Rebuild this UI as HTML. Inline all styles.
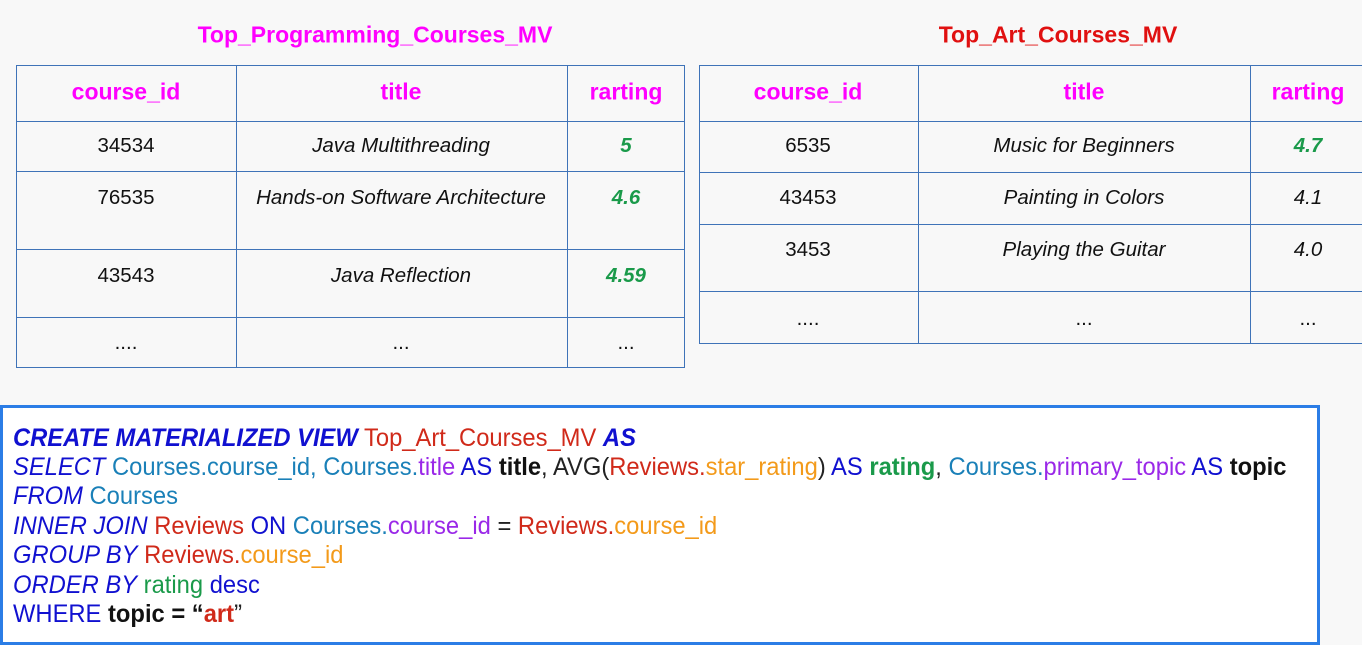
<!DOCTYPE html>
<html><head><meta charset="utf-8"><style>
body{margin:0;width:1362px;height:628px;background:#f8f8f8;position:relative;overflow:hidden;font-family:"Liberation Sans",Arial,sans-serif}
.hl{position:absolute;height:1px;background:#3f73b8}
.vl{position:absolute;width:1px;background:#3f73b8}
.t{position:absolute;transform:translate(-50%,-50%);white-space:nowrap;font-size:20.5px;color:#111}
.h{font-size:23px;font-weight:bold;color:#f0f}
.i{font-style:italic}
.g{color:#1a9a4a;font-weight:bold;font-style:italic}
#code{position:absolute;left:0;top:405px;width:1320px;height:240px;border:3px solid #2b7de6;background:#fff;box-sizing:border-box}
#code div{position:absolute;left:10px;white-space:nowrap;font-size:25px;line-height:28px;transform:scaleX(0.95);transform-origin:left center}
.k{color:#1010d0;font-style:italic}.kb{color:#1010d0;font-style:italic;font-weight:bold}
.b{color:#1010d0}.c{color:#1a80b8}.p{color:#9a28e8}.r{color:#d02a1a}.o{color:#f39a1a}.gr{color:#1a9a4a}.bk{color:#111;font-weight:bold}.dk{color:#222}
</style></head><body>
<div class="t h" style="left:375px;top:35px">Top_Programming_Courses_MV</div>
<div class="t h" style="left:1058px;top:35px;color:#e01010">Top_Art_Courses_MV</div>

<div class="hl" style="left:16px;width:669px;top:65px"></div>
<div class="hl" style="left:16px;width:669px;top:121px"></div>
<div class="hl" style="left:16px;width:669px;top:171px"></div>
<div class="hl" style="left:16px;width:669px;top:249px"></div>
<div class="hl" style="left:16px;width:669px;top:317px"></div>
<div class="hl" style="left:16px;width:669px;top:367px"></div>
<div class="vl" style="top:65px;height:303px;left:16px"></div>
<div class="vl" style="top:65px;height:303px;left:236px"></div>
<div class="vl" style="top:65px;height:303px;left:567px"></div>
<div class="vl" style="top:65px;height:303px;left:684px"></div>
<div class="t h" style="left:126px;top:92px">course_id</div>
<div class="t h" style="left:401px;top:92px">title</div>
<div class="t h" style="left:626px;top:92px">rarting</div>
<div class="t" style="left:126px;top:146px">34534</div>
<div class="t i" style="left:401px;top:146px">Java Multithreading</div>
<div class="t g" style="left:626px;top:146px">5</div>
<div class="t" style="left:126px;top:198px">76535</div>
<div class="t i" style="left:401px;top:198px">Hands-on Software Architecture</div>
<div class="t g" style="left:626px;top:198px">4.6</div>
<div class="t" style="left:126px;top:276px">43543</div>
<div class="t i" style="left:401px;top:276px">Java Reflection</div>
<div class="t g" style="left:626px;top:276px">4.59</div>
<div class="t" style="left:126px;top:343px">....</div>
<div class="t" style="left:401px;top:343px">...</div>
<div class="t" style="left:626px;top:343px">...</div>

<div class="hl" style="left:699px;width:663px;top:65px"></div>
<div class="hl" style="left:699px;width:663px;top:121px"></div>
<div class="hl" style="left:699px;width:663px;top:172px"></div>
<div class="hl" style="left:699px;width:663px;top:224px"></div>
<div class="hl" style="left:699px;width:663px;top:291px"></div>
<div class="hl" style="left:699px;width:663px;top:343px"></div>
<div class="vl" style="top:65px;height:279px;left:699px"></div>
<div class="vl" style="top:65px;height:279px;left:918px"></div>
<div class="vl" style="top:65px;height:279px;left:1250px"></div>
<div class="t h" style="left:808px;top:92px">course_id</div>
<div class="t h" style="left:1084px;top:92px">title</div>
<div class="t h" style="left:1308px;top:92px">rarting</div>
<div class="t" style="left:808px;top:146px">6535</div>
<div class="t i" style="left:1084px;top:146px">Music for Beginners</div>
<div class="t g" style="left:1308px;top:146px">4.7</div>
<div class="t" style="left:808px;top:198px">43453</div>
<div class="t i" style="left:1084px;top:198px">Painting in Colors</div>
<div class="t i" style="left:1308px;top:198px">4.1</div>
<div class="t" style="left:808px;top:250px">3453</div>
<div class="t i" style="left:1084px;top:250px">Playing the Guitar</div>
<div class="t i" style="left:1308px;top:250px">4.0</div>
<div class="t" style="left:808px;top:319px">....</div>
<div class="t" style="left:1084px;top:319px">...</div>
<div class="t" style="left:1308px;top:319px">...</div>

<div id="code">
<div style="top:16px"><span class="kb">CREATE MATERIALIZED VIEW</span> <span class="r">Top_Art_Courses_MV</span> <span class="kb">AS</span></div>
<div style="top:45px"><span class="k">SELECT</span> <span class="c">Courses.course_id, Courses.</span><span class="p">title</span> <span class="b">AS</span> <span class="bk">title</span><span class="dk">, AVG(</span><span class="r">Reviews.</span><span class="o">star_rating</span><span class="dk">)</span> <span class="b">AS</span> <span class="gr" style="font-weight:bold">rating</span><span class="dk">,</span> <span class="c">Courses.</span><span class="p">primary_topic</span> <span class="b">AS</span> <span class="bk">topic</span></div>
<div style="top:74px"><span class="k">FROM</span> <span class="c">Courses</span></div>
<div style="top:104px"><span class="k">INNER JOIN</span> <span class="r">Reviews</span> <span class="b">ON</span> <span class="c">Courses.</span><span class="p">course_id</span> <span class="dk">=</span> <span class="r">Reviews.</span><span class="o">course_id</span></div>
<div style="top:133px"><span class="k">GROUP BY</span> <span class="r">Reviews.</span><span class="o">course_id</span></div>
<div style="top:163px"><span class="k">ORDER BY</span> <span class="gr">rating</span> <span class="b">desc</span></div>
<div style="top:192px"><span class="b">WHERE</span> <span class="bk">topic = “</span><span class="r" style="font-weight:bold">art</span><span class="dk">”</span></div>
</div>
</body></html>
